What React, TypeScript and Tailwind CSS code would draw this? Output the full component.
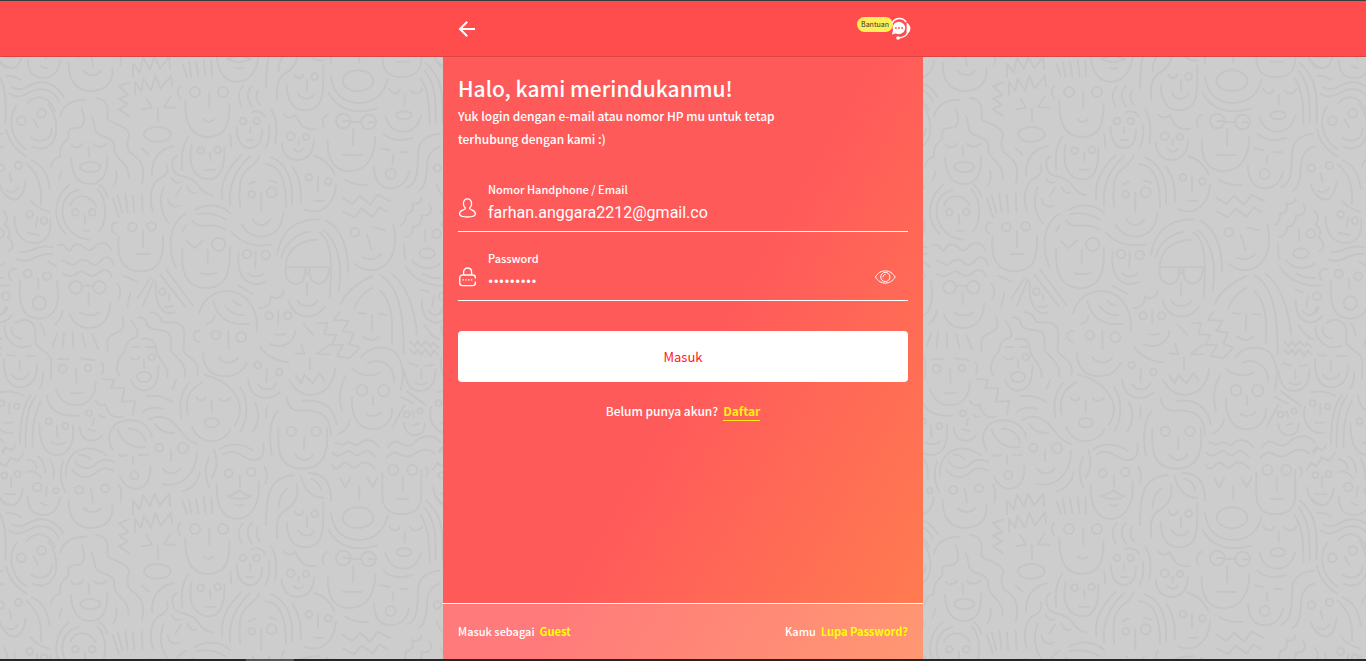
import React, { useState } from "react";

type Circle = [number, number, number];
type Oval = [number, number, number, number];

const TILE = 1311;

const upperCircles: Circle[] = [
  [64, 212, 13], [125, 190, 13], [585, 126, 15], [669, 126, 15], [729, 213, 10], [770, 213, 10],
  [872, 259, 12], [918, 261, 9], [1030, 213, 22], [1106, 216, 22], [602, 302, 10], [653, 300, 10],
  [1, 354, 11], [55, 346, 11], [755, 433, 10], [815, 427, 15], [927, 382, 10], [985, 394, 10],
  [1172, 372, 15], [226, 487, 10], [277, 487, 10], [89, 493, 10], [132, 512, 10], [397, 531, 13],
  [455, 529, 13], [656, 583, 20], [741, 612, 13], [797, 615, 13], [1064, 547, 13], [1310, 551, 13],
  [83, 671, 12], [141, 679, 12], [227, 712, 19], [298, 712, 19], [118, 759, 20], [487, 725, 10],
  [18, 739, 12], [807, 797, 11], [863, 797, 11], [648, 856, 13], [724, 862, 15],
];

const upperOvals: Oval[] = [
  [472, 253, 40, 22], [1212, 196, 23, 12], [271, 351, 30, 15], [1281, 610, 23, 15],
];

const upperPaths: string[] = [
  // tilted face with wavy hair
  "M50 168C30 190 30 225 40 250C50 275 65 290 80 298", "M145 162C165 190 172 220 168 250C160 290 130 305 97 290",
  "M100 208L115 234", "M94 263C120 282 155 270 155 236", "M82 161C105 134 145 132 165 182",
  "M36 112C75 130 80 100 120 97C155 95 175 115 190 140", "M28 131C70 155 80 120 120 118C150 117 165 130 177 155",
  "M-1 80C20 120 18 170 17 217", "M18 238C25 270 45 300 80 320",
  // long wavy hair
  "M180 198C190 160 220 148 258 149", "M245 175C258 205 255 235 230 234C200 235 205 245 205 265C180 290 180 290 180 320C155 330 155 340 153 350",
  "M275 198C290 225 275 240 300 255C340 268 345 275 343 300C345 330 388 335 386 383",
  "M288 143C335 150 320 190 323 208C335 220 380 225 388 255C375 290 385 305 400 315C435 340 432 365 426 402",
  "M215 284C222 295 242 295 249 281", "M279 281C290 294 310 293 319 281", "M265 291L268 320",
  "M213 323C215 375 235 401 270 402C310 401 323 370 322 315", "M185 364L177 390", "M348 362C353 380 348 398 340 408",
  // spiky hair
  "M399 82L399 41L419 68L429 23L450 58L463 20L480 55L508 20L510 57",
  "M405 135L405 96L423 123L431 86L453 122L466 77L482 116L513 77L516 108",
  "M388 97L357 108L385 135L357 146L383 163L357 178L388 199",
  "M439 144L456 173L426 178", "M511 140L492 172L527 173", "M473 174L475 215", "M425 295L446 314",
  "M541 108C530 120 530 132 541 145", "M556 153C555 200 562 260 625 261C685 260 688 210 689 163",
  "M628 127L628 174", "M611 208C620 219 632 219 641 208",
  "M729 109C713 125 713 148 725 169", "M756 109C738 125 740 148 756 169", "M774 121C767 135 768 150 780 165",
  // small round face
  "M710 231C710 270 725 294 750 294C778 292 786 265 786 240", "M751 232L751 250", "M741 269C748 271 755 271 761 269",
  "M754 187C770 180 788 185 795 201", "M814 178C830 205 832 245 826 279", "M807 224C810 250 808 275 797 292", "M691 253L694 290",
  "M845 277C845 310 865 330 893 330C925 328 940 305 942 272", "M896 269L896 285", "M880 296C890 309 903 308 910 296",
  "M852 194C865 208 880 202 887 195C900 225 915 244 948 236", "M983 194C968 200 965 220 972 233",
  // man with glasses
  "M1052 216L1084 216", "M1060 238L1059 285", "M1028 314L1086 315", "M1030 213L1048 213", "M1106 217L1121 217",
  "M983 271C983 330 1000 361 1048 364C1105 362 1125 315 1126 262",
  "M1168 117C1178 135 1193 133 1199 120", "M1231 120C1240 135 1258 134 1267 117", "M1214 135L1214 165",
  "M1156 199C1165 230 1185 245 1212 245C1240 244 1255 225 1263 198", "M1150 250C1170 272 1205 273 1237 264",
  "M1262 85C1288 125 1288 170 1289 225", "M1274 62C1308 105 1308 150 1307 220", "M1278 40C1325 85 1330 120 1327 217",
  "M1318 251C1280 256 1255 275 1255 305C1252 350 1256 400 1222 412", "M1321 290C1295 295 1281 320 1281 350C1279 385 1276 410 1257 423",
  "M1142 295L1168 300", "M1201 306L1224 307", "M1181 315L1177 341", "M1122 349C1122 390 1140 415 1172 415C1205 414 1223 390 1228 363",
  // thin face with hood
  "M564 261C545 290 542 325 547 361", "M575 284C570 310 570 340 578 356C592 380 605 388 630 388C665 385 675 345 673 290",
  "M630 308L632 332", "M616 359L646 359", "M456 374C455 325 480 297 521 288",
  "M531 318C515 325 512 345 525 368C540 382 575 380 590 400C605 420 610 430 637 436",
  "M500 345C508 365 495 380 475 388C450 410 447 450 459 484", "M491 411C475 450 483 495 507 520",
  "M515 384C520 397 533 401 541 396", "M562 410C568 427 580 432 588 427", "M543 413L527 439", "M503 447C507 468 525 474 539 467",
  // long straight hair, smiling
  "M724 315C675 365 662 400 667 447", "M750 318C705 360 685 410 690 466", "M778 318C770 350 720 355 720 410C716 435 718 450 721 469",
  "M797 343C840 345 858 395 858 469", "M813 322C860 340 880 390 876 462", "M876 350C898 380 905 420 902 456",
  "M747 403C755 397 760 397 766 395", "M809 391L831 398", "M784 427L784 487", "M757 508C770 530 797 532 811 508",
  "M725 522C745 570 820 575 842 522L851 490", "M695 547C730 585 775 590 814 584",
  "M942 318C970 325 990 340 1004 374", "M1008 403C1005 460 965 500 913 478", "M954 381L954 423", "M942 451C952 454 962 454 971 451",
  "M1036 389C1055 402 1080 406 1104 405", "M-1 405C15 450 65 480 77 394", "M29 370L34 395", "M21 423C33 430 46 427 54 413",
  "M79 341C120 375 125 415 123 463", "M95 331C130 345 145 380 149 416", "M91 450C108 472 125 480 148 485",
  "M43 497C43 555 70 579 106 579C140 578 155 550 151 508", "M112 502L107 532", "M82 548L116 555",
  "M207 404C160 445 155 510 197 552", "M236 419C175 435 185 495 195 518C210 550 235 566 267 569",
  "M210 466C225 430 265 430 288 466", "M292 418C325 450 320 520 297 543", "M299 405C311 413 318 425 322 440",
  "M254 494L256 521", "M250 542L268 542",
  // buzz cut
  "M338 443L357 501", "M353 436L367 488", "M376 432L383 487", "M398 435L403 487", "M425 432L428 486",
  "M353 518C331 512 330 547 349 552", "M356 560C350 620 365 664 423 664C480 664 492 620 489 556", "M429 543L429 591", "M410 612L449 612",
  // winking face
  "M557 491C500 525 505 610 528 652", "M584 480C620 460 665 462 691 490", "M589 492C625 485 650 492 676 508",
  "M576 512C600 545 640 510 676 539", "M557 526L547 544", "M560 573L584 595L609 571", "M623 599L623 642",
  "M547 598C544 655 550 713 620 714C690 712 690 650 690 591", "M602 670C618 674 635 674 650 669",
  "M716 607C710 660 725 700 768 702C780 701 790 700 797 695", "M767 606L766 653", "M744 670C752 680 778 685 791 670",
  "M716 707L759 732",
  // sunglasses
  "M831 613C845 540 885 508 958 508", "M844 622C855 580 890 550 930 545", "M857 652C858 600 900 570 951 569",
  "M857 652L986 652M917 652L917 673M928 652L928 670M917 670L928 670", "M857 652C850 715 915 715 914 673L914 652",
  "M929 652L929 673C935 715 990 710 986 652", "M957 547C1000 570 995 660 989 744", "M971 541C1015 575 1028 650 1016 719",
  "M980 512C1035 545 1045 610 1044 667", "M921 700L921 735", "M892 752C905 774 940 773 953 752", "M866 752C885 815 950 810 974 770",
  // zigzag fringe
  "M1027 443L1057 462L1080 437L1110 464L1133 434L1170 453", "M1029 484L1062 502L1085 476L1118 500L1138 472L1162 486",
  "M1180 523C1190 575 1185 600 1172 625C1145 670 1095 668 1064 641", "M1101 555L1114 598", "M1119 532L1156 541", "M1088 622C1105 630 1130 630 1144 611",
  "M1264 446C1262 462 1245 465 1237 458C1242 475 1237 490 1218 493C1218 505 1215 520 1202 525",
  "M1288 463C1300 480 1290 500 1265 496C1268 515 1255 532 1240 529C1240 548 1230 562 1215 560",
  "M1321 482C1338 500 1332 518 1323 523C1342 535 1343 548 1334 562C1352 575 1353 598 1336 603",
  "M1275 539L1276 573", "M1213 584C1212 600 1212 615 1217 627", "M1237 631C1255 657 1295 661 1321 641",
  "M1216 649C1240 690 1290 712 1340 706", "M1268 671C1285 682 1305 686 1322 683",
  // wavy stripes
  "M60 604C95 615 100 580 158 592", "M51 628C95 645 100 610 158 611", "M145 634L169 650",
  "M176 586C200 575 195 605 210 602C220 590 222 578 240 584C255 590 260 610 280 596C295 570 325 575 333 600",
  "M188 633C205 630 205 650 225 643C240 628 250 625 265 634C280 650 290 648 305 630C320 613 337 625 341 645",
  "M190 671C205 683 215 680 230 670C250 655 255 675 275 678C290 678 300 660 315 660C330 662 333 670 335 681",
  "M49 658C25 652 20 680 34 691", "M60 694C55 760 65 805 118 806C170 804 180 760 171 694", "M114 687L116 715", "M188 782C187 800 180 810 166 822",
  "M246 708C255 706 265 706 279 708", "M266 728L266 764", "M239 786C255 799 285 799 298 786", "M210 793C220 820 240 834 270 834C310 832 330 800 330 760",
  "M371 677L412 695", "M352 701C364 715 364 735 353 748", "M452 684L412 746", "M462 689L429 767", "M391 729L382 770",
  "M468 697C463 740 475 790 512 790L523 787", "M507 734L508 753", "M495 771C505 772 513 771 521 767",
  "M482 675L555 769", "M498 658L578 765", "M-8 796C8 796 10 785 18 772", "M-1 818C15 815 28 805 35 797",
  // domed hair
  "M597 790C620 700 750 695 770 810L770 844", "M639 751C650 800 685 830 747 821", "M675 766C687 785 705 797 732 796",
  "M700 751C707 761 715 765 723 766", "M644 798C640 812 632 820 620 822", "M597 843C575 840 575 872 597 876",
  "M685 843L686 898", "M851 722C850 742 825 750 812 738C815 760 800 775 779 774", "M835 783L835 820",
  "M824 853C835 855 845 855 856 852", "M886 842C882 885 840 896 808 882", "M911 823L939 854", "M780 890C800 920 830 933 865 937",
  "M1018 787L1001 810L1046 812L1027 843L1062 848L1048 882L1078 892L1063 910L1047 925L1011 918L1030 884L994 884L1010 855L973 853L982 819L953 820",
  "M1117 678C1070 700 1035 730 1022 763", "M1117 713C1090 730 1070 750 1062 777", "M1141 722C1175 755 1180 810 1175 878",
  "M1141 676C1195 705 1212 790 1211 910", "M1174 670C1230 715 1245 790 1251 852",
  "M1076 789L1099 791", "M1135 791L1160 794", "M1117 794L1115 843", "M1089 859C1105 874 1125 873 1138 858",
  "M1264 719L1286 726", "M1302 737L1297 770", "M1286 782C1295 798 1325 803 1334 771", "M1265 750C1265 785 1275 815 1310 818C1325 817 1335 812 1346 797",
  "M47 818C75 800 112 810 106 860C105 870 106 878 108 885", "M35 832C30 850 45 865 65 866", "M14 828C10 860 35 892 70 892C80 891 85 890 92 887", "M121 822C130 832 132 842 133 854",
  "M172 850L158 888", "M192 847L188 893", "M218 847L220 894", "M246 852L257 894", "M276 853L295 897",
  "M1273 825C1290 850 1300 862 1317 868", "M1230 874L1245 890L1253 872L1264 890L1276 873L1292 890L1300 878L1314 893", "M1230 899L1244 912L1253 898L1264 916L1276 897L1292 919L1302 901L1314 915",
];

const lowerCircles: Circle[] = [
  [188, 56, 12], [264, 54, 10], [146, 214, 9], [196, 228, 9], [267, 190, 9], [5, 160, 9], [50, 169, 8],
  [13, 376, 9], [53, 372, 9], [112, 411, 13], [168, 422, 8], [238, 420, 12], [315, 415, 12], [478, 293, 12],
  [549, 294, 15], [403, 376, 12], [773, 45, 10], [838, 67, 10], [1086, 121, 16], [1151, 122, 17],
  [874, 244, 14], [948, 244, 14], [686, 370, 12], [754, 366, 13], [1220, 193, 9], [1260, 183, 8],
  [1180, 360, 15], [1237, 360, 15], [455, 21, 10], [944, 491, 10],
];

const lowerOvals: Oval[] = [[432, 81, 21, 16], [635, 218, 21, 14], [1074, 503, 46, 31]];

const lowerPaths: string[] = [
  "M20 13C28 16 35 17 45 17", "M78 17L106 17", "M59 32L59 60", "M36 72C45 93 75 93 86 69", "M12 28C12 75 20 110 62 112C100 110 112 80 110 45",
  "M108 -20C120 5 155 5 154 40L153 84", "M129 68C130 90 128 100 119 115",
  "M174 28C185 26 195 26 207 28", "M241 25L285 31", "M228 57L230 99", "M214 128C225 131 237 131 248 127",
  "M167 117C180 150 200 166 228 166C270 165 288 130 287 95", "M304 38C312 48 312 60 306 71",
  "M141 136C145 180 175 200 236 197", "M309 87L343 90L333 114L373 115L366 155L406 153L398 193",
  "M288 153C297 170 308 168 316 163C322 190 340 210 368 199", "M283 204L278 225", "M299 193C302 202 308 203 314 199",
  "M264 238L287 244", "M239 232C242 260 255 272 275 272C290 271 300 265 306 256",
  "M366 -100C375 -75 372 -60 345 -50C315 -35 322 -25 323 5", "M394 -87C415 -60 415 -45 409 -38C380 -30 378 -15 374 5C355 20 340 60 361 79",
  "M415 -97C435 -102 440 -85 443 -72C460 -55 480 -65 500 -55C520 -40 510 -15 511 0C530 25 560 40 555 79",
  "M452 -114C475 -112 480 -98 487 -85C510 -80 540 -90 550 -65C560 -40 545 -10 552 5C570 30 600 30 592 74",
  "M425 -33C455 -40 470 -20 468 5C480 35 505 45 503 81",
  "M396 -8L417 -9", "M439 -9L460 -8", "M391 22C400 33 415 30 418 20", "M431 28L433 54", "M475 48C475 85 470 121 430 122C410 120 400 110 393 90",
  "M529 89L517 118", "M0 127C20 122 50 124 71 137", "M28 162L28 192", "M12 219L40 217", "M-18 170C-30 215 0 255 38 248",
  "M92 136C65 170 60 230 60 280", "M108 138C80 170 75 240 77 290", "M123 154C100 195 96 240 98 290",
  "M170 226L173 262", "M155 277C170 285 188 284 198 275", "M118 220C118 275 130 315 172 315C215 312 222 270 219 226",
  "M9 309L18 292L33 302L46 286", "M0 338L17 348L32 322L53 333L72 309", "M34 380L33 409", "M13 431C25 433 35 433 46 432",
  "M-14 410C-5 450 20 467 38 465C55 463 65 440 68 415",
  "M113 318C128 330 135 345 136 366", "M82 328C100 330 108 340 110 356", "M82 366C100 360 115 370 124 384", "M149 328C162 345 163 365 161 384",
  "M141 411L137 438", "M122 458C130 465 135 466 142 466", "M83 441C85 480 100 495 133 495C160 494 175 475 180 443",
  "M197 376C197 300 260 275 320 315", "M190 334C175 370 185 405 196 427", "M238 314C255 313 265 320 272 329",
  "M224 334C240 360 270 360 290 340C300 330 320 325 343 336", "M217 360C240 390 270 385 290 366C305 353 320 350 341 362",
  "M272 416L279 457", "M252 474C265 490 290 490 303 474", "M206 449C206 505 230 534 275 534C325 532 340 500 337 466", "M357 405C365 420 365 440 361 456",
  "M338 300C315 260 330 210 392 211C430 212 455 240 456 263", "M353 238C365 275 395 298 436 291", "M384 236C410 235 430 250 438 276",
  "M357 315C365 319 375 318 381 314", "M417 314C425 317 435 317 444 313", "M398 317L400 342", "M360 378C370 405 385 416 408 416C440 413 452 385 451 349",
  "M446 210C475 190 510 200 540 240C555 262 570 278 591 281", "M464 221C480 245 500 250 522 249", "M513 301L513 334", "M489 356C505 378 530 372 541 355",
  "M591 302C590 370 550 412 488 403", "M599 367C594 395 580 415 549 424", "M440 139C470 134 495 140 517 157", "M429 187C440 173 465 170 489 176",
  "M567 99C545 125 535 155 544 202", "M607 97C565 120 555 150 563 191", "M613 74C700 95 745 165 704 225", "M576 231C600 288 670 285 691 238",
  "M589 142C598 155 612 154 617 142", "M656 144C665 157 682 155 691 143", "M635 150L635 187", "M721 112C740 140 750 195 722 243", "M764 157C780 185 778 220 759 244", "M801 171C797 185 798 195 799 204",
  "M609 10C610 60 640 80 680 79C715 77 730 60 740 38", "M656 22C670 43 700 42 715 23", "M801 58L799 95", "M774 103C790 127 823 120 829 100", "M745 87C745 125 770 144 800 144C820 143 830 135 839 127",
  "M903 -18L914 13L887 10", "M986 -15L950 12L988 13", "M930 24L930 58", "M887 77L903 100L912 75L938 100L958 69L974 92", "M868 92C885 120 905 135 932 135C980 132 1003 95 1005 56",
  "M1084 23C1110 -20 1180 -15 1195 20C1215 60 1210 85 1202 120", "M1104 39C1145 20 1185 50 1182 96", "M1057 56C1080 80 1115 80 1141 68", "M1038 77C1020 105 1015 145 1026 184",
  "M1119 139L1119 166", "M1098 191C1110 201 1133 200 1143 187", "M1055 143C1055 205 1075 237 1120 238C1160 236 1177 205 1176 177",
  "M1213 165L1179 229", "M1201 141L1242 160", "M1221 124L1280 167",
  "M1213 60C1220 120 1245 125 1265 122C1295 120 1305 95 1307 60", "M1228 39L1252 48", "M1277 48L1300 45", "M1264 60L1264 86", "M1246 97C1254 107 1273 107 1280 96",
  "M1239 184L1242 203", "M1237 226C1245 223 1252 222 1258 221", "M1212 219C1215 247 1230 256 1247 256C1265 254 1275 240 1274 221",
  "M860 143C865 180 885 182 910 182C960 180 990 195 993 252", "M907 152C955 148 1000 160 1010 224", "M834 182C805 215 808 270 815 314",
  "M835 235C832 300 835 355 908 356C980 354 985 295 981 235", "M913 261L913 298", "M887 314C898 336 930 334 939 314", "M1050 208C1045 230 1035 245 1015 252",
  "M1006 279C1020 273 1020 293 1037 280C1055 265 1062 298 1078 280C1100 260 1125 273 1137 292",
  "M998 308C1010 325 1025 315 1037 306C1060 292 1060 328 1080 313C1100 292 1115 310 1124 320",
  "M995 342C1005 365 1015 355 1027 342C1045 325 1050 360 1068 353C1090 325 1115 340 1124 356",
  "M1164 292C1180 265 1195 275 1208 282C1230 295 1240 282 1252 270C1275 253 1305 255 1321 276",
  "M1159 325C1180 300 1190 307 1202 315C1230 325 1240 315 1250 307C1275 292 1290 300 1305 310",
  "M1021 385L1036 413L1050 385", "M1102 383L1118 411L1132 384", "M1078 409L1078 448",
  "M1208 380L1208 422", "M1190 446L1226 446", "M1147 367L1147 435C1148 475 1170 493 1205 493C1245 492 1264 475 1264 435L1264 360", "M1276 352C1286 360 1286 370 1279 378",
  "M1298 360L1311 341L1330 350", "M1300 415C1303 435 1313 455 1328 464", "M1317 305L1328 290",
  "M659 298C690 275 730 282 760 302", "M669 313C700 290 730 325 755 330C785 333 793 315 791 279", "M627 323C612 350 615 385 628 411", "M643 300C655 340 650 360 635 384",
  "M719 376L721 409", "M680 437C700 435 712 428 719 420C728 430 740 436 753 438C735 450 700 450 680 437Z", "M708 464C716 468 724 468 730 464",
  "M650 403C648 460 665 507 710 507C760 505 780 455 776 396", "M794 350C802 365 802 385 796 399",
  "M798 526C798 440 805 380 881 375", "M863 415C845 430 835 450 836 473", "M891 403C898 450 880 465 850 485C830 500 828 530 832 562",
  "M902 378C910 415 935 445 971 443", "M933 387C950 392 960 405 964 420", "M926 368C980 370 993 405 993 454",
  "M884 484C890 500 905 499 910 484", "M921 502L921 532", "M894 540C905 563 935 562 943 541", "M860 517C862 565 880 592 915 592C955 590 970 570 970 500L970 459",
  "M993 491C1000 540 1025 568 1075 570C1130 570 1155 535 1163 498", "M986 540C1015 595 1075 605 1132 586",
  "M548 454L561 491", "M567 448L574 490", "M588 446L595 490", "M611 443L617 490", "M634 444L636 490",
  "M19 488C38 487 50 492 61 500",
];

function Strokes({ circles, ovals, paths }: { circles: Circle[]; ovals: Oval[]; paths: string[] }) {
  return (
    <>
      {circles.map(([cx, cy, r]) => (
        <circle key={`${cx}-${cy}`} cx={cx} cy={cy} r={r} />
      ))}
      {ovals.map(([cx, cy, rx, ry]) => (
        <ellipse key={`${cx}-${cy}`} cx={cx} cy={cy} rx={rx} ry={ry} />
      ))}
      {paths.map((d) => (
        <path key={d} d={d} />
      ))}
    </>
  );
}

function DoodleBackground() {
  return (
    <svg className="absolute inset-0 h-full w-full" aria-hidden="true">
      <defs>
        <g id="faces" fill="none" stroke="#c5c5c5" strokeWidth="6" strokeLinecap="round" strokeLinejoin="round">
          <Strokes circles={upperCircles} ovals={upperOvals} paths={upperPaths} />
          <g transform="translate(0 900)">
            <Strokes circles={lowerCircles} ovals={lowerOvals} paths={lowerPaths} />
          </g>
        </g>
        <pattern
          id="doodle"
          width={TILE}
          height={TILE}
          patternUnits="userSpaceOnUse"
          patternTransform="translate(0 50) scale(0.33333)"
        >
          <use href="#faces" />
          <use href="#faces" x={-TILE} />
          <use href="#faces" x={TILE} />
          <use href="#faces" y={-TILE} />
          <use href="#faces" x={-TILE} y={-TILE} />
        </pattern>
      </defs>
      <rect width="100%" height="100%" fill="url(#doodle)" />
    </svg>
  );
}

function BackIcon() {
  return (
    <svg width="18" height="18" viewBox="0 0 18 18" fill="none" stroke="white" strokeWidth="2" aria-hidden="true">
      <path d="M17 9H2.5M9.2 1.8L2 9L9.2 16.2" />
    </svg>
  );
}

function SupportIcon() {
  return (
    <svg width="22" height="24" viewBox="0 0 22 24" fill="none" aria-hidden="true">
      <path d="M3.2 6.2C5.5.8 13.5-.4 17.2 5.2" stroke="white" strokeWidth="1.5" />
      <path d="M17.6 5.4V17.2C20 16 21.4 13.8 21.4 11.5S20 6.6 17.6 5.4Z" fill="white" />
      <path d="M18.5 16C17.2 19.2 14 20.4 9.5 21" stroke="white" strokeWidth="1.3" />
      <circle cx="9" cy="21" r="1.8" fill="white" />
      <path d="M10 4.7a6.4 6.2 0 1 1-3.1 11.7L2.8 17.5L4.1 13.2A6.4 6.2 0 0 1 10 4.7Z" fill="white" />
      <g fill="#ff4d4d">
        <circle cx="6.9" cy="11" r=".9" />
        <circle cx="10" cy="11" r=".9" />
        <circle cx="13.1" cy="11" r=".9" />
      </g>
    </svg>
  );
}

function UserIcon() {
  return (
    <svg width="18" height="20" viewBox="0 0 18 20" fill="none" stroke="white" strokeWidth="1.3" aria-hidden="true">
      <path d="M9.5 .9C7.1.9 5.4 2.8 5.4 5.4C5.4 7.5 6.2 9.1 7.3 10C7.5 10.9 6.8 11.3 5.3 11.9C2.8 12.8 1.6 14.1 1.6 15.8C1.6 18.2 4.6 19 9.5 19S17.4 18.2 17.4 15.8C17.4 14.1 16.2 12.8 13.7 11.9C12.2 11.3 11.5 10.9 11.7 10C12.8 9.1 13.6 7.5 13.6 5.4C13.6 2.8 11.9.9 9.5.9Z" />
    </svg>
  );
}

function LockIcon() {
  return (
    <svg width="18" height="20" viewBox="0 0 18 20" fill="none" stroke="white" strokeWidth="1.3" aria-hidden="true">
      <path d="M5.6 8V5.2C5.6 2.8 7.3 1 9.6 1S13.6 2.8 13.6 5.2V8" />
      <path d="M17.3 11.5V10.5C17.3 8.8 16.3 8 14.8 8H4.4C2.8 8 1.8 9 1.8 10.5V16C1.8 17.8 2.8 18.6 4.4 18.6H14.8C16.3 18.6 17.3 17.8 17.3 16V14.6" />
      <path d="M4.5 12.9H15" strokeWidth="1.1" strokeDasharray="1.4 1.4" />
    </svg>
  );
}

function EyeIcon() {
  return (
    <svg width="22" height="14" viewBox="0 0 22 14" fill="none" stroke="white" strokeWidth="1" aria-hidden="true">
      <path d="M1.4 7C4 3 7 .9 11.3 .9S18.7 3 21.2 7C18.7 11 15.5 13.1 11.3 13.1S4 11 1.4 7Z" />
      <circle cx="11.3" cy="7" r="4.6" />
      <path d="M8.9 7.2C8.9 5.6 9.9 4.6 11.5 4.5" />
    </svg>
  );
}

const linkStyle = "font-bold text-[#ffff00]";
const fieldStyle = "flex h-[52px] items-start gap-3 border-b border-white";
const labelStyle = "text-[11px] leading-[18px]";
const inputStyle = "h-7 w-full bg-transparent font-[Roboto,sans-serif] text-base font-normal outline-none";

export default function App() {
  const [visible, setVisible] = useState(false);

  return (
    <div className="relative flex min-h-screen flex-col bg-[#cdcdcd] font-['Noto_Sans_CJK_JP','Noto_Sans',sans-serif] font-medium text-white">
      <DoodleBackground />

      <header className="relative border-t border-b border-t-[#3c3c3c] border-b-[#dc4444] bg-[#ff4d4d]">
        <div className="mx-auto flex h-[55px] w-full max-w-[480px] items-center justify-between pr-3 pl-[15px]">
          <button type="button" aria-label="Kembali">
            <BackIcon />
          </button>
          <button type="button" className="flex items-start">
            <span className="rounded-full bg-[#ffee58] px-1 text-[7px] leading-[15px] font-normal text-[#333333]">
              Bantuan
            </span>
            <span className="-ml-1">
              <SupportIcon />
            </span>
          </button>
        </div>
      </header>

      <main className="relative mx-auto flex w-full max-w-[480px] flex-1 flex-col bg-[linear-gradient(120deg,#ff5a5a_52%,#ff7e50_100%)]">
        <div className="flex-1 px-[15px] pt-[15px]">
          <h1 className="text-[21px] leading-8">Halo, kami merindukanmu!</h1>
          <p className="max-w-[340px] text-xs leading-[23px]">
            Yuk login dengan e-mail atau nomor HP mu untuk tetap terhubung dengan kami :)
          </p>

          <form className="pt-[30px]" onSubmit={(event) => event.preventDefault()}>
            <div className={fieldStyle}>
              <span className="mt-1 self-center">
                <UserIcon />
              </span>
              <div className="flex flex-1 flex-col">
                <label htmlFor="account" className={labelStyle}>
                  Nomor Handphone / Email
                </label>
                <input id="account" type="text" defaultValue="farhan.anggara2212@gmail.co" className={inputStyle} />
              </div>
            </div>

            <div className="h-[17px]" />

            <div className={fieldStyle}>
              <span className="mt-1 self-center">
                <LockIcon />
              </span>
              <div className="flex flex-1 flex-col">
                <label htmlFor="password" className={labelStyle}>
                  Password
                </label>
                <input
                  id="password"
                  type={visible ? "text" : "password"}
                  defaultValue="rahasia12"
                  className={inputStyle}
                />
              </div>
              <button
                type="button"
                aria-label="Tampilkan password"
                className="mt-1 mr-3 self-center"
                onClick={() => setVisible(!visible)}
              >
                <EyeIcon />
              </button>
            </div>

            <button
              type="submit"
              className="mt-[30px] h-[51px] w-full rounded bg-white text-[13px] font-normal text-[#ff2020]"
            >
              Masuk
            </button>
          </form>

          <p className="mt-5 flex justify-center gap-[5px] text-xs leading-[18px]">
            Belum punya akun?
            <a href="#daftar" className="border-b border-[#ffeb18] font-bold text-[#ffeb18]">
              Daftar
            </a>
          </p>
        </div>

        <footer className="flex h-14 items-center justify-between border-t border-white bg-white/20 px-[15px] text-[11px]">
          <p className="flex gap-[5px]">
            Masuk sebagai
            <a href="#guest" className={linkStyle}>
              Guest
            </a>
          </p>
          <p className="flex gap-[5px]">
            Kamu
            <a href="#lupa-password" className={linkStyle}>
              Lupa Password?
            </a>
          </p>
        </footer>
      </main>

      <div className="relative h-0.5 bg-[#262626]">
        <div className="ml-[18%] h-full w-12 bg-[#555555]" />
      </div>
    </div>
  );
}
